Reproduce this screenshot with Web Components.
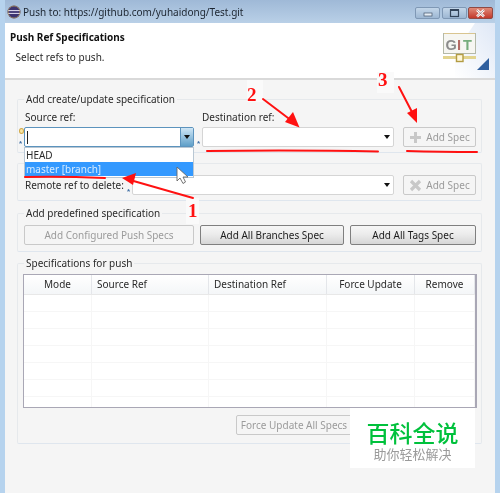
<!doctype html>
<html>
<head>
<meta charset="utf-8">
<title>Push Ref Specifications</title>
<style>
    html, body { margin: 0; height: 100%; background: #f5f5f5; overflow: hidden; }
</style>
</head>
<body>
<push-dialog>
    <title-bar>Push to: https://github.com/yuhaidong/Test.git</title-bar>
    <wizard-header heading="Push Ref Specifications">Select refs to push.</wizard-header>
    <spec-group legend="Add create/update specification" style="margin-bottom:10px">
        <div slot="body" style="display:grid;grid-template-columns:170px 192px 74px;column-gap:8px;align-items:center">
            <span style="padding-left:1px;height:17px">Source ref:</span>
            <span style="height:17px">Destination ref:</span>
            <span></span>
            <ref-combo focused hint>
                <div>HEAD</div>
                <div style="background:#3399ff;color:#d5ebff">master [branch]</div>
            </ref-combo>
            <ref-combo></ref-combo>
            <spec-button disabled icon="plus" style="margin-left:1px">Add Spec</spec-button>
        </div>
    </spec-group>
    <spec-group style="margin-bottom:5px">
        <div slot="body" style="display:grid;grid-template-columns:108px 262px 82px;align-items:center">
            <span style="padding-left:1px">Remote ref to delete:</span>
            <ref-combo></ref-combo>
            <spec-button disabled icon="cross" style="margin-left:9px">Add Spec</spec-button>
        </div>
    </spec-group>
    <spec-group legend="Add predefined specification" style="margin-bottom:4px">
        <div slot="body" style="display:grid;grid-template-columns:170px 144px 126px;column-gap:6px;padding:1px 0">
            <spec-button disabled>Add Configured Push Specs</spec-button>
            <spec-button>Add All Branches Spec</spec-button>
            <spec-button>Add All Tags Spec</spec-button>
        </div>
    </spec-group>
    <spec-group legend="Specifications for push">
        <div slot="body">
            <spec-table style="margin:0 -1px"></spec-table>
            <spec-button disabled style="width:116px;margin:7px 0 3px 212px">Force Update All Specs</spec-button>
        </div>
    </spec-group>
    <red-notes></red-notes>
    <baike-mark></baike-mark>
</push-dialog>

<script>
const UI_FONT = '"Noto Sans", "Noto Sans CJK SC", sans-serif'

class PushDialog extends HTMLElement {
    constructor() {
        super()
        this.attachShadow({mode: 'open'}).innerHTML = `
        <style>
            :host {
                display: block;
                position: relative;
                width: 500px;
                height: 493px;
                overflow: hidden;
                box-sizing: border-box;
                background: #f5f5f5;
                border-left: 5px solid #b6d3ee;
                border-right: 5px solid #b6d3ee;
                font: 10px ${UI_FONT};
                color: #2a2a2a;
                filter: blur(.3px);
            }
        </style>
        <slot></slot>
        `
    }
}
customElements.define('push-dialog', PushDialog)

class TitleBar extends HTMLElement {
    constructor() {
        super()
        this.attachShadow({mode: 'open'}).innerHTML = `
        <style>
            :host {
                display: flex;
                align-items: center;
                height: 23px;
                margin: 0 -5px;
                padding: 0 7px;
                box-sizing: border-box;
                background: linear-gradient(#9fb9d7, #b9d0e7);
                font: 10px ${UI_FONT};
                color: #1c2530;
            }
            svg { margin: 0 2px 0 0; flex: none; }
            #text { flex: 1; white-space: nowrap; }
            #btns { display: flex; margin: 3px 0 0 0; }
            .b {
                width: 25px; height: 12px;
                margin-left: 2px;
                box-sizing: border-box;
                border: 1px solid #7f98b5;
                border-radius: 2px;
                background: linear-gradient(#c3d6e9, #9db7d3);
                display: flex; align-items: center; justify-content: center;
            }
            .b svg { margin: 0; }
            .x { margin-left: 1px; background: linear-gradient(#e08a78, #c3392b); border-color: #8f4a44; }
        </style>
        <svg width="14" height="14" viewBox="0 0 14 14">
            <circle cx="7" cy="7" r="6.5" fill="#3d3470"/>
            <path d="M1 5.6h12M1 8.4h12" stroke="#e6e2f2" stroke-width="1"/>
            <circle cx="7" cy="7" r="6" fill="none" stroke="#c7a84e" stroke-width=".6"/>
        </svg>
        <span id="text"><slot></slot></span>
        <div id="btns">
            <div class="b"><svg width="10" height="8"><rect x="1" y="4" width="8" height="3" fill="#e5edf5" stroke="#44556b" stroke-width=".7"/></svg></div>
            <div class="b"><svg width="12" height="9"><rect x="1.5" y="1" width="8" height="6.5" fill="none" stroke="#33445a" stroke-width="1.2"/><rect x="1" y="0" width="9" height="2" fill="#33445a"/></svg></div>
            <div class="b x"><svg width="12" height="9"><path d="M2 1l7 6.5M9 1L2 7.5" stroke="#fff" stroke-width="2.4"/><path d="M2 1l7 6.5M9 1L2 7.5" stroke="#6b2f2a" stroke-width=".5"/></svg></div>
        </div>
        `
    }
}
customElements.define('title-bar', TitleBar)

class WizardHeader extends HTMLElement {
    constructor() {
        super()
        this.attachShadow({mode: 'open'})
    }
    connectedCallback() {
        this.shadowRoot.innerHTML = `
        <style>
            :host {
                display: block;
                position: relative;
                height: 55px;
                background: #fff;
                border-bottom: 2px solid #d9d9d9;
                margin-bottom: 12px;
            }
            h1 { margin: 0; padding: 7px 0 0 5px; font: bold 10px ${UI_FONT}; color: #111; }
            p { margin: 0; padding: 6px 0 0 10.5px; }
            #logo { position: absolute; right: 0; top: 0; }
        </style>
        <h1>${this.getAttribute('heading')}</h1>
        <p><slot></slot></p>
        <svg id="logo" width="60" height="55" viewBox="0 0 60 55">
            <defs>
                <linearGradient id="g" x1="0" x2="1" y1="1" y2="0">
                    <stop offset="0" stop-color="#fff"/><stop offset="1" stop-color="#dfe8f6"/>
                </linearGradient>
            </defs>
            <path d="M60 0H40L20 30V55H60Z" fill="url(#g)"/>
            <rect x="8.500" y="10.500" width="32" height="20" fill="#f6f6f2" stroke="#b4b9a8"/>
            <path d="M9 10.500h31" stroke="#d9c590"/>
            <text x="10.500" y="27" font-family="Liberation Sans, sans-serif" font-weight="bold" font-size="14.500" fill="#8c8c8c">G</text>
            <text x="22" y="27" font-family="Liberation Sans, sans-serif" font-weight="bold" font-size="14.500" fill="#b36a64">I</text>
            <text x="28" y="27" font-family="Liberation Sans, sans-serif" font-weight="bold" font-size="14.500" fill="#76ad7c">T</text>
            <rect x="8" y="33" width="33" height="3" fill="#e2d48e"/>
            <rect x="21.500" y="31.500" width="6.500" height="7" fill="#fff8d8" stroke="#b39c43" stroke-width="1.400"/>
            <path d="M42 47H54V35Z" fill="#2f5f9e"/>
        </svg>
        `
    }
}
customElements.define('wizard-header', WizardHeader)

class SpecGroup extends HTMLElement {
    constructor() {
        super()
        this.attachShadow({mode: 'open'})
    }
    connectedCallback() {
        const legend = this.getAttribute('legend')
        this.shadowRoot.innerHTML = `
        <style>
            :host {
                display: block;
                margin: 0 13px 0 12px;
            }
            fieldset {
                margin: 0;
                padding: ${legend ? 4 : 11}px 5px 5px 6px;
                border: 1px solid #e6e9ec;
                border-bottom-color: #dfe6ee;
                border-radius: 2px;
                min-width: 0;
            }
            legend { padding: 0 2px; line-height: 14px; }
        </style>
        <fieldset>
            ${legend ? `<legend>${legend}</legend>` : ''}
            <slot name="body"></slot>
        </fieldset>
        `
    }
}
customElements.define('spec-group', SpecGroup)

class RefCombo extends HTMLElement {
    constructor() {
        super()
        this.attachShadow({mode: 'open'})
    }
    connectedCallback() {
        const focused = this.hasAttribute('focused')
        this.shadowRoot.innerHTML = `
        <style>
            :host {
                display: block;
                position: relative;
                height: 20px;
                box-sizing: border-box;
                background: #fff;
                border: 1px solid ${focused ? '#5c93bd' : '#d5d5d5'};
                border-radius: 2px;
            }
            #caret { position: absolute; left: 2px; top: 3px; width: 1px; height: 13px; background: #222; display: ${focused ? 'block' : 'none'}; }
            #drop {
                position: absolute; right: 0; top: 0; bottom: 0; width: 12px;
                display: flex; align-items: center; justify-content: center;
            }
            #drop.f { background: linear-gradient(#cfe6f5, #5f9fc8); border-left: 1px solid #5c93bd; }
            #drop i { width: 0; height: 0; border: 3.5px solid transparent; border-top: 4px solid #111; border-bottom: 0; }
            #list {
                position: absolute; left: -1px; right: -1px; top: 19px; z-index: 5;
                background: #fff; border: 1px solid #b9c7d3;
                padding: 0 0 1px; line-height: 14px;
                display: ${this.children.length ? 'block' : 'none'};
            }
            ::slotted(div) { padding-left: 1px; height: 14px; }
            .deco { position: absolute; left: -6px; bottom: -1px; color: #3e6ea5; font: bold 8px "Liberation Sans", sans-serif; line-height: 7px; }
            #bulb { position: absolute; left: -6px; top: 0; width: 3px; height: 4px; border-radius: 50%; background: #f7e7a6; border: 1px solid #d2a94a; display: ${this.hasAttribute('hint') ? 'block' : 'none'}; }
        </style>
        <div id="caret"></div>
        <div id="bulb"></div>
        <span class="deco">*</span>
        <div id="drop" class="${focused ? 'f' : ''}"><i></i></div>
        <div id="list"><slot></slot></div>
        `
    }
}
customElements.define('ref-combo', RefCombo)

class SpecButton extends HTMLElement {
    constructor() {
        super()
        this.attachShadow({mode: 'open'})
    }
    connectedCallback() {
        const disabled = this.hasAttribute('disabled')
        const icon = this.getAttribute('icon')
        const glyph = icon == 'plus'
            ? '<path d="M5 1h3v4h4v3H8v4H5V8H1V5h4z" fill="#c8c8c8"/>'
            : '<path d="M2 2l9 9M11 2l-9 9" stroke="#c8c8c8" stroke-width="3.200"/>'
        this.shadowRoot.innerHTML = `
        <style>
            :host {
                display: flex;
                align-items: center;
                justify-content: center;
                gap: 4px;
                height: 20px;
                box-sizing: border-box;
                white-space: nowrap;
                border-radius: 2px;
                ${disabled
                    ? 'background:#f5f5f5;border:1px solid #c9c9c9;color:#9b9b9b;'
                    : 'background:linear-gradient(#f6f6f6 0,#ececec 45%,#d6d6d6 100%);border:1px solid #7f7f7f;color:#1c1c1c;'}
            }
        </style>
        ${icon ? `<svg width="13" height="13" viewBox="0 0 13 13">${glyph}</svg>` : ''}
        <span><slot></slot></span>
        `
    }
}
customElements.define('spec-button', SpecButton)

class SpecTable extends HTMLElement {
    constructor() {
        super()
        this.attachShadow({mode: 'open'})
    }
    connectedCallback() {
        const cols = [['Mode', 68], ['Source Ref', 117], ['Destination Ref', 118], ['Force Update', 88], ['Remove', 60]]
        const head = cols.map(c => `<div class="h" style="width:${c[1]}px">${c[0]}</div>`).join('')
        const cells = cols.map(c => `<div class="c" style="width:${c[1]}px"></div>`).join('')
        let rows = ''
        for (let i = 0; i < 7; i++) rows += `<div class="r">${cells}</div>`
        this.shadowRoot.innerHTML = `
        <style>
            :host {
                display: block;
                height: 134px;
                box-sizing: border-box;
                overflow: hidden;
                background: #fff;
                border: 1px solid #a9a7b5;
                border-right-width: 2px;
            }
            #head { display: flex; height: 19px; background: linear-gradient(#fff, #f4f6f8); border-bottom: 1px solid #e8e8e8; }
            .h { box-sizing: border-box; border-right: 1px solid #e4e6ea; text-align: center; line-height: 19px; flex: none; }
            .h:nth-child(n+2):nth-child(-n+3) { text-align: left; padding-left: 5px; }
            .r { display: flex; height: 17px; box-sizing: border-box; border-bottom: 1px solid #f6f6f6; }
            .c { box-sizing: border-box; border-right: 1px solid #f6f6f6; flex: none; }
        </style>
        <div id="head">${head}</div>
        ${rows}
        `
    }
}
customElements.define('spec-table', SpecTable)

class RedNotes extends HTMLElement {
    constructor() {
        super()
        this.attachShadow({mode: 'open'}).innerHTML = `
        <style>
            :host { position: absolute; left: -5px; top: 0; width: 500px; height: 493px; pointer-events: none; z-index: 9; }
            .patch { position: absolute; background: #fafafa; }
            .n { position: absolute; color: #f11; font: bold 19px "Liberation Serif", serif; line-height: 20px; }
            svg { position: absolute; left: 0; top: 0; }
        </style>
        <div class="patch" style="left:377px;top:72px;width:17px;height:21px"></div>
        <div class="patch" style="left:186px;top:198px;width:13px;height:26px"></div>
        <div class="patch" style="left:247px;top:80px;width:16px;height:22px"></div>
        <span class="n" style="left:378px;top:70px">3</span>
        <span class="n" style="left:247px;top:85px">2</span>
        <span class="n" style="left:188px;top:201px">1</span>
        <svg width="500" height="493" viewBox="0 0 500 493">
            <g stroke="#f11" stroke-width="2" fill="none" stroke-linecap="round">
                <path d="M263 99L292 121"/>
                <path d="M399 87L413 114"/>
                <path d="M193 198L130 180"/>
                <path d="M207 151Q300 150 378 151.500"/>
                <path d="M407 151Q440 152 477 152"/>
                <path d="M25 177Q60 176 105 178"/>
            </g>
            <g fill="#f11">
                <path d="M299.500 127.500L285 122L293 112Z"/>
                <path d="M417 123L407 113L417 108Z"/>
                <path d="M122 178L136 173L133 185Z"/>
            </g>
            <path d="M177 167V181L180 178L183 183.500L185.500 182L183 177H188Z" fill="#fff" stroke="#666" stroke-width=".9"/>
        </svg>
        `
    }
}
customElements.define('red-notes', RedNotes)

class BaikeMark extends HTMLElement {
    constructor() {
        super()
        this.attachShadow({mode: 'open'}).innerHTML = `
        <style>
            :host {
                position: absolute; left: 345px; top: 408px; width: 125px; height: 60px; z-index: 8;
                background: #fff;
                display: flex; flex-direction: column; align-items: center;
                font-family: "Noto Sans CJK SC", sans-serif;
            }
            b { font-size: 23px; line-height: 26px; margin-top: 11px; color: #00c13c; font-weight: 500; }
            span { font-size: 13px; line-height: 16px; margin-top: 1px; color: #9a9a9a; }
        </style>
        <b>百科全说</b>
        <span>助你轻松解决</span>
        `
    }
}
customElements.define('baike-mark', BaikeMark)
</script>
</body>
</html>
